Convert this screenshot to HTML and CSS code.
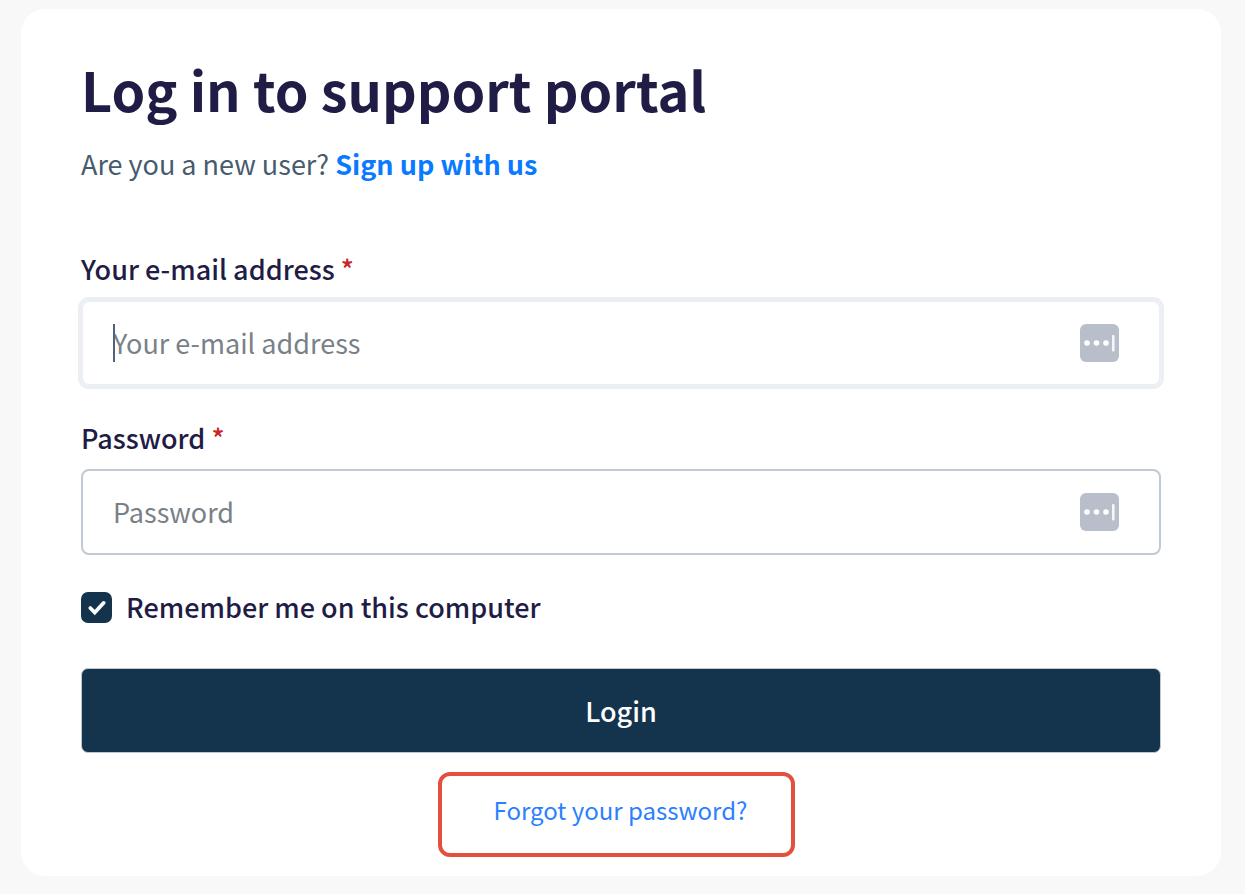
FILE: index.html
```html
<!DOCTYPE html>
<html lang="en">
<head>
<meta charset="utf-8">
<title>Support portal</title>
<link rel="stylesheet" href="styles.css">
</head>
<body>
<main class="card">
  <h1 class="title">Log in to support portal</h1>
  <p class="intro">Are you a new user? <a class="signup" href="#signup">Sign up with us</a></p>
  <form class="form">
    <label class="label" for="email">Your e-mail address <span class="required">*</span></label>
    <div class="field field-focused">
      <span class="caret"></span>
      <input class="input" id="email" type="email" placeholder="Your e-mail address">
      <svg class="manager" viewBox="0 0 39 38" aria-hidden="true"><rect width="39" height="38" rx="6" fill="#b8bfca"/><g fill="#fff"><circle cx="7" cy="19" r="2.8"/><circle cx="16.500" cy="19" r="2.800"/><circle cx="26" cy="19" r="2.800"/><rect x="32" y="11" width="2.600" height="16.500" rx="1" opacity=".85"/></g></svg>
    </div>
    <label class="label" for="password">Password <span class="required">*</span></label>
    <div class="field">
      <input class="input" id="password" type="password" placeholder="Password">
      <svg class="manager" viewBox="0 0 39 38" aria-hidden="true"><rect width="39" height="38" rx="6" fill="#b8bfca"/><g fill="#fff"><circle cx="7" cy="19" r="2.8"/><circle cx="16.500" cy="19" r="2.800"/><circle cx="26" cy="19" r="2.800"/><rect x="32" y="11" width="2.600" height="16.500" rx="1" opacity=".85"/></g></svg>
    </div>
    <div class="remember">
      <span class="tick"><input class="checkbox" id="remember" type="checkbox" checked><svg class="check" viewBox="0 0 30 30" aria-hidden="true"><path d="M9 15.500l4.300 4.300L22 10.500" fill="none" stroke="#fff" stroke-width="3.600" stroke-linecap="round"/></svg></span>
      <label class="remember-label" for="remember">Remember me on this computer</label>
    </div>
    <button class="login" type="submit">Login</button>
  </form>
  <a class="forgot" href="#forgot">Forgot your password?</a>
</main>
</body>
</html>
```
FILE: styles.css
```css
* { box-sizing: border-box; }
body {
  margin: 0;
  padding: 9px 24px 18px 21px;
  background: #f8f8f8;
  color: #1f1c45;
  font-family: "Noto Sans CJK SC", "Noto Sans", sans-serif;
  font-size: 27px;
  line-height: 40px;
}
.card {
  display: flex;
  flex-direction: column;
  padding: 44px 60px 19px;
  border-radius: 24px;
  background: #fff;
}
.title { margin: 0; font-size: 54px; line-height: 72px; font-weight: 700; }
.intro { margin: 19px 0 65px; color: #475b6e; }
.signup { color: #0a7aff; font-weight: 700; text-decoration: none; }
.form { display: flex; flex-direction: column; }
.label, .remember-label { font-weight: 500; }
.label { margin-bottom: 11px; }
.required { color: #c9252b; }
.field {
  position: relative;
  display: flex;
  align-items: center;
  height: 86px;
  margin-bottom: 32px;
  padding: 0 40px 0 30px;
  border: 2px solid #c0cad4;
  border-radius: 8px;
}
.field-focused { border-color: #ebeff4; box-shadow: 0 0 0 3px #ebeff4; }
.input {
  flex: 1;
  min-width: 0;
  padding: 0;
  border: 0;
  outline: 0;
  background: none;
  color: inherit;
  font: inherit;
}
.input::placeholder { color: #788188; opacity: 1; }
.caret { position: absolute; left: 30px; top: 22px; width: 2px; height: 38px; background: #4f6478; }
.manager { width: 39px; height: 38px; }
.remember { display: flex; align-items: center; gap: 14px; margin-bottom: 41px; }
.tick { position: relative; display: flex; }
.checkbox { appearance: none; width: 31px; height: 31px; margin: 0; border-radius: 7px; background: #14344d; }
.check { position: absolute; inset: 0; pointer-events: none; }
.login {
  height: 85px;
  border: 1px solid #bcc8d2;
  border-radius: 7px;
  background: #14344d;
  color: #fff;
  font: inherit;
  font-weight: 500;
}
.forgot {
  align-self: center;
  margin: 19px 9px 0 0;
  padding: 14px 44px 23px 52px;
  border: 4px solid #e3503d;
  border-radius: 12px;
  color: #2b80ff;
  font-size: 24px;
  text-decoration: none;
}
```
